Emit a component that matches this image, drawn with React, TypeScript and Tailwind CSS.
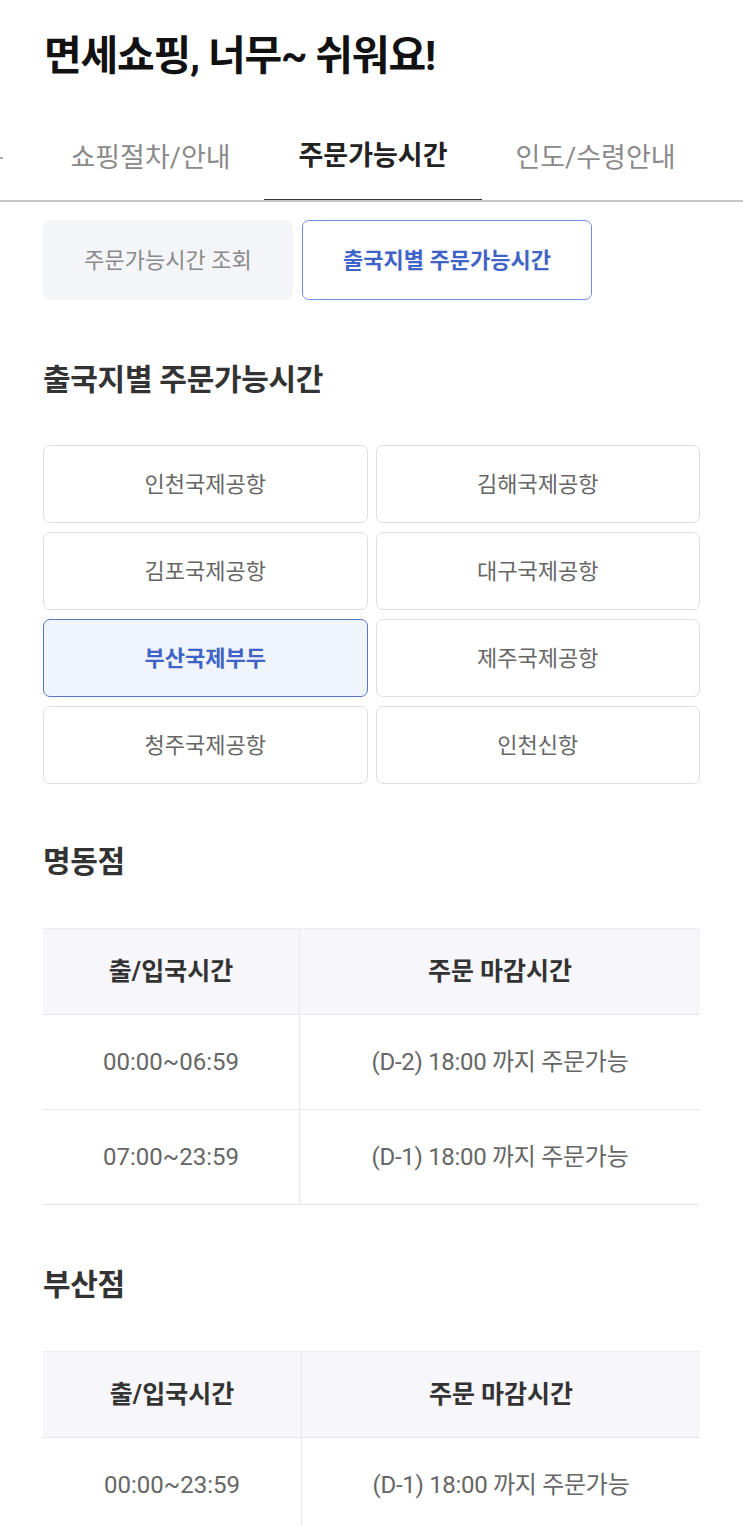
import React from 'react';

const airports = [
  { name: '인천국제공항' },
  { name: '김해국제공항' },
  { name: '김포국제공항' },
  { name: '대구국제공항' },
  { name: '부산국제부두', active: true },
  { name: '제주국제공항' },
  { name: '청주국제공항' },
  { name: '인천신항' },
];

type Row = { time: string; deadline: string };

const TimeTable: React.FC<{ rows: Row[]; wide?: boolean }> = ({ rows, wide }) => {
  const cols = wide ? 'grid-cols-[259px_1fr]' : 'grid-cols-[257px_1fr]';
  return (
    <div className="border-t border-[#ececec]">
      <div className={`grid ${cols} bg-[#f7f7fb] border-b border-[#e6e6e6] h-[86px]`}>
        <div className="flex items-center justify-center border-r border-[#e6e6e6] text-[25px] font-bold text-[#333]">
          출/입국시간
        </div>
        <div className="flex items-center justify-center text-[25px] font-bold text-[#333]">
          주문 마감시간
        </div>
      </div>
      {rows.map((r) => (
        <div key={r.time} className={`grid ${cols} border-b border-[#e6e6e6] h-[95px]`}>
          <div className="flex items-center justify-center border-r border-[#e6e6e6] text-[24px] text-[#666]">
            {r.time}
          </div>
          <div className="flex items-center justify-center text-[24px] text-[#666] tracking-[-0.3px]">
            {r.deadline}
          </div>
        </div>
      ))}
    </div>
  );
};

const App: React.FC = () => {
  return (
    <div
      className="w-[743px] h-[1526px] overflow-hidden bg-white"
      style={{ fontFamily: 'Roboto, "Noto Sans CJK KR", sans-serif' }}
    >
      <h1 className="px-[44px] pt-[32px] text-[41px] leading-[48px] font-bold text-[#111] tracking-[-1.2px]">
        면세쇼핑, 너무~ 쉬워요!
      </h1>

      <div className="mt-[30px] flex border-b-2 border-[#c6c6c6] overflow-hidden">
        <div className="shrink-0 w-[37px] h-[92px] -mb-[2px] flex items-center pt-[4px]">
          <span className="block w-[3px] h-[2px] bg-[#aaa]"></span>
        </div>
        <div className="shrink-0 w-[227px] h-[92px] -mb-[2px] flex items-center justify-center pt-[4px] text-[27px] text-[#8a8a8a]">
          쇼핑절차/안내
        </div>
        <div className="shrink-0 w-[218px] h-[92px] -mb-[2px] flex items-center justify-center pt-[4px] text-[27px] font-bold text-[#222] border-b-[3px] border-[#333]">
          주문가능시간
        </div>
        <div className="shrink-0 w-[227px] h-[92px] -mb-[2px] flex items-center justify-center pt-[4px] text-[27px] text-[#8a8a8a]">
          인도/수령안내
        </div>
      </div>

      <div className="px-[43px]">
        <div className="mt-[18px] flex gap-[9px]">
          <div className="w-[250px] h-[80px] rounded-[7px] bg-[#f4f5f8] flex items-center justify-center text-[22px] text-[#8a8a8a]">
            주문가능시간 조회
          </div>
          <div className="w-[290px] h-[80px] rounded-[7px] border-[1.5px] border-[#6f8edb] bg-white flex items-center justify-center text-[22px] font-bold text-[#3f63c6]">
            출국지별 주문가능시간
          </div>
        </div>

        <h2 className="mt-[61px] text-[30px] leading-[38px] font-bold text-[#333] tracking-[-0.3px]">
          출국지별 주문가능시간
        </h2>

        <div className="mt-[46px] grid grid-cols-2 gap-x-[8px] gap-y-[9px]">
          {airports.map((a) =>
            a.active ? (
              <div
                key={a.name}
                className="h-[78px] rounded-[7px] border-[1.5px] border-[#5577c8] bg-[#f0f4fb] flex items-center justify-center text-[22px] font-bold text-[#3f63c6]"
              >
                {a.name}
              </div>
            ) : (
              <div
                key={a.name}
                className="h-[78px] rounded-[7px] border border-[#dedede] bg-white flex items-center justify-center text-[22px] text-[#666]"
              >
                {a.name}
              </div>
            )
          )}
        </div>

        <h2 className="mt-[59px] text-[30px] leading-[38px] font-bold text-[#333] tracking-[-0.3px]">
          명동점
        </h2>
        <div className="mt-[47px]">
          <TimeTable
            rows={[
              { time: '00:00~06:59', deadline: '(D-2) 18:00 까지 주문가능' },
              { time: '07:00~23:59', deadline: '(D-1) 18:00 까지 주문가능' },
            ]}
          />
        </div>

        <h2 className="mt-[61px] text-[30px] leading-[38px] font-bold text-[#333] tracking-[-0.3px]">
          부산점
        </h2>
        <div className="mt-[47px]">
          <TimeTable wide rows={[{ time: '00:00~23:59', deadline: '(D-1) 18:00 까지 주문가능' }]} />
        </div>
      </div>
    </div>
  );
};

export default App;
